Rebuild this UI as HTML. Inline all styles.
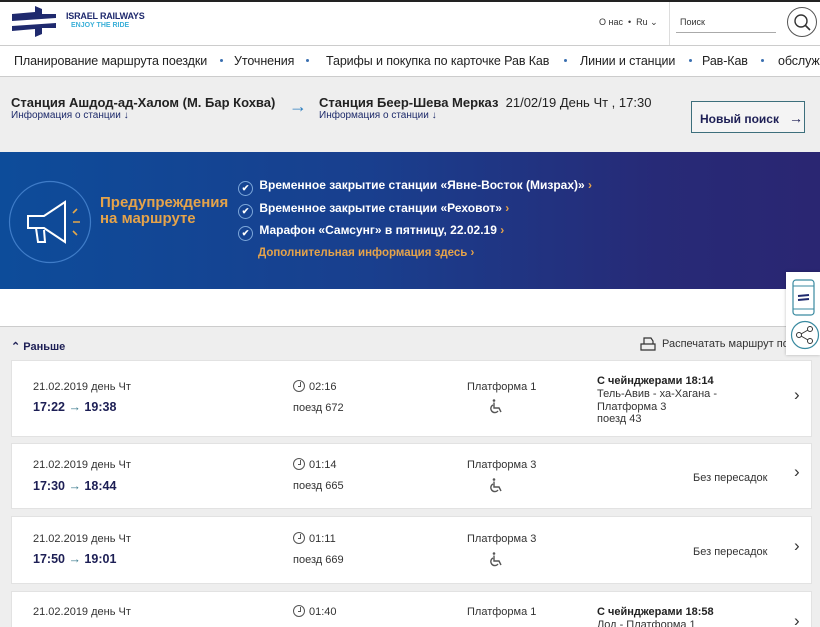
<!DOCTYPE html>
<html><head><meta charset="utf-8"><style>
*{margin:0;padding:0;box-sizing:border-box}
html,body{width:820px;height:627px;overflow:hidden}
body{font-family:"Liberation Sans",Arial,sans-serif;color:#222;background:#fff;position:relative}
.a{position:absolute;white-space:nowrap}
.nav{font-size:12.5px;color:#222;letter-spacing:-.1px;top:54px}
.dot{position:absolute;top:59px;width:3px;height:3px;border-radius:50%;background:#3a6fb0}
.card{position:absolute;left:11px;width:801px;background:#fff;border:1px solid #e2e2e2;overflow:hidden}
.card .a{font-size:11px;color:#333}
.card .tm{font-weight:bold;font-size:12.5px;color:#1d1f55}
.card .chev{font-size:17px;color:#333}
.ck{display:inline-block;width:12px;height:12px;border:1px solid #555;border-radius:50%;vertical-align:-2px;margin-right:4px;position:relative}
.ck:after{content:"";position:absolute;left:4px;top:1px;width:2px;height:4px;border-right:1px solid #555;border-bottom:1px solid #555}
.chk{display:inline-block;width:15px;height:15px;border-radius:50%;border:1px solid #7ca7da;font-size:9px;text-align:center;line-height:13px;vertical-align:-2px;margin-right:3px}
</style></head><body>
<div class="a" style="left:0;top:0;width:820px;height:2px;background:#222"></div>
<svg class="a" style="left:9px;top:5px" width="50" height="34" viewBox="0 0 50 34">
<path d="M3 9 L26 7 L26 1 L33 4 L33 9 L47 9 L47 13 L3 16Z" fill="#1f2a6e"/>
<path d="M3 21 L47 18 L47 23 L33 23 L33 29 L26 32 L26 24 L3 26Z" fill="#1f2a6e"/>
</svg>
<div class="a" style="left:66px;top:11px;font-size:9px;font-weight:bold;color:#1f2a6e;letter-spacing:-.2px">ISRAEL RAILWAYS</div>
<div class="a" style="left:71px;top:22px;font-size:7px;font-weight:bold;color:#3cb0d8">ENJOY THE RIDE</div>
<div class="a" style="left:599px;top:17px;font-size:9px;color:#333">О нас &nbsp;•&nbsp; Ru ⌄</div>
<div class="a" style="left:669px;top:2px;width:1px;height:43px;background:#ddd"></div>
<div class="a" style="left:680px;top:17px;font-size:9px;color:#333">Поиск</div>
<div class="a" style="left:676px;top:32px;width:100px;height:1px;background:#aaa"></div>
<svg class="a" style="left:786px;top:6px" width="32" height="32" viewBox="0 0 32 32"><circle cx="16" cy="16" r="14.5" fill="none" stroke="#555" stroke-width="1"/><circle cx="15" cy="15" r="6" fill="none" stroke="#333" stroke-width="1.4"/><path d="M19.5 19.5 L24 24" stroke="#333" stroke-width="1.6"/></svg>
<div class="a" style="left:0;top:45px;width:820px;height:1px;background:#ccc"></div>
<div class="a nav" style="left:14px">Планирование маршрута поездки</div>
<div class="dot" style="left:220px"></div>
<div class="a nav" style="left:234px">Уточнения</div>
<div class="dot" style="left:306px"></div>
<div class="a nav" style="left:326px">Тарифы и покупка по карточке Рав Кав</div>
<div class="dot" style="left:564px"></div>
<div class="a nav" style="left:580px">Линии и станции</div>
<div class="dot" style="left:689px"></div>
<div class="a nav" style="left:702px">Рав-Кав</div>
<div class="dot" style="left:761px"></div>
<div class="a nav" style="left:778px">обслуживание</div>
<div class="a" style="left:0;top:76px;width:820px;height:76px;background:#eeeeee;border-top:1px solid #ccc"></div>
<div class="a" style="left:11px;top:95px;font-size:13px;font-weight:bold;color:#222">Станция Ашдод-ад-Халом (М. Бар Кохва)</div>
<div class="a" style="left:11px;top:110px;font-size:10px;color:#1d2a6a">Информация о станции ↓</div>
<div class="a" style="left:289px;top:96px;font-size:18px;color:#2c7fc0">→</div>
<div class="a" style="left:319px;top:95px;font-size:13px;font-weight:bold;color:#222">Станция Беер-Шева Мерказ <span style="font-weight:normal">&nbsp;21/02/19 День Чт , 17:30</span></div>
<div class="a" style="left:319px;top:110px;font-size:10px;color:#1d2a6a">Информация о станции ↓</div>
<div class="a" style="left:691px;top:101px;width:114px;height:32px;border:1.5px solid #3d6f7c;background:#f4f4f4;font-size:12px;font-weight:bold;color:#1d1f55;padding:8px 0 0 8px">Новый поиск &nbsp; <span style="font-size:14px;font-weight:normal">→</span></div>
<div class="a" style="left:0;top:152px;width:820px;height:137px;background:linear-gradient(90deg,#0d4c9a 0%,#193f8e 45%,#272a77 80%,#2a2672 100%)"></div>
<svg class="a" style="left:8px;top:180px" width="84" height="84" viewBox="0 0 84 84"><circle cx="42" cy="42" r="40.5" fill="none" stroke="#3f7cc8" stroke-width="1.2"/>
<path d="M20 36 L36 36 L57 22 L57 62 L36 48 L20 48 Z" fill="none" stroke="#fff" stroke-width="2"/><path d="M28 48 L30 62 L37 62 L36 50" fill="none" stroke="#fff" stroke-width="2"/>
<path d="M65 33 L69 29 M65 42 L72 42 M65 51 L69 55" stroke="#e6a84a" stroke-width="1.6"/></svg>
<div class="a" style="left:100px;top:195px;font-size:15px;font-weight:bold;color:#e5a34a;line-height:16px">Предупреждения<br>на маршруте</div>
<div class="a" style="left:238px;top:174px;font-size:12px;font-weight:bold;color:#fff;line-height:22.5px">
<div><span class="chk">✔</span> Временное закрытие станции «Явне-Восток (Мизрах)» <span style="color:#e5a34a">›</span></div>
<div><span class="chk">✔</span> Временное закрытие станции «Реховот» <span style="color:#e5a34a">›</span></div>
<div><span class="chk">✔</span> Марафон «Самсунг» в пятницу, 22.02.19 <span style="color:#e5a34a">›</span></div>
<div style="color:#e5a34a;padding-left:20px;font-size:11.5px">Дополнительная информация здесь ›</div>
</div>
<div class="a" style="left:0;top:326px;width:820px;height:301px;background:#eeeeee;border-top:1px solid #ccc"></div>
<div class="a" style="left:11px;top:340px;font-size:11px;font-weight:bold;color:#1d1f55">⌃ Раньше</div>
<svg class="a" style="left:640px;top:336px" width="16" height="15" viewBox="0 0 16 15"><path d="M1 8 L15 8 L15 14 L1 14 Z M4 8 L4 2 L11 2 L13 5 L13 8" fill="none" stroke="#333" stroke-width="1.2"/></svg>
<div class="a" style="left:662px;top:338px;font-size:11px;color:#333">Распечатать маршрут по</div>

<svg width="0" height="0" style="position:absolute"><defs><g id="wc"><circle cx="4" cy="1.5" r="1.3" fill="#555"/><path d="M4 3.5 L4 9 L9 9 L11 13 M3 6 A4 4 0 1 0 8 12" fill="none" stroke="#555" stroke-width="1.4"/></g></defs></svg>

<div class="card" style="top:360px;height:77px">
<div class="a" style="left:21px;top:20px">21.02.2019 день Чт</div>
<div class="a tm" style="left:21px;top:39px">17:22 <span style="color:#3a7a8c;font-weight:normal">→</span> 19:38</div>
<div class="a" style="left:281px;top:19px"><span class="ck"></span>02:16</div><div class="a" style="left:281px;top:41px">поезд 672</div>
<div class="a" style="left:455px;top:20px">Платформа 1</div><svg class="a" style="left:478px;top:38px" width="13" height="15"><use href="#wc"/></svg>
<div class="a" style="left:585px;top:14px;font-weight:bold;color:#222">С чейнджерами 18:14</div>
<div class="a" style="left:585px;top:27px;line-height:12.5px">Тель-Авив - ха-Хагана -<br>Платформа 3<br>поезд 43</div>
<div class="a chev" style="left:782px;top:24px">›</div></div>

<div class="card" style="top:443px;height:66px">
<div class="a" style="left:21px;top:15px">21.02.2019 день Чт</div>
<div class="a tm" style="left:21px;top:35px">17:30 <span style="color:#3a7a8c;font-weight:normal">→</span> 18:44</div>
<div class="a" style="left:281px;top:14px"><span class="ck"></span>01:14</div><div class="a" style="left:281px;top:36px">поезд 665</div>
<div class="a" style="left:455px;top:15px">Платформа 3</div><svg class="a" style="left:478px;top:34px" width="13" height="15"><use href="#wc"/></svg>
<div class="a" style="left:681px;top:28px">Без пересадок</div>
<div class="a chev" style="left:782px;top:18px">›</div></div>

<div class="card" style="top:516px;height:68px">
<div class="a" style="left:21px;top:16px">21.02.2019 день Чт</div>
<div class="a tm" style="left:21px;top:35px">17:50 <span style="color:#3a7a8c;font-weight:normal">→</span> 19:01</div>
<div class="a" style="left:281px;top:15px"><span class="ck"></span>01:11</div><div class="a" style="left:281px;top:37px">поезд 669</div>
<div class="a" style="left:455px;top:16px">Платформа 3</div><svg class="a" style="left:478px;top:35px" width="13" height="15"><use href="#wc"/></svg>
<div class="a" style="left:681px;top:29px">Без пересадок</div>
<div class="a chev" style="left:782px;top:19px">›</div></div>

<div class="card" style="top:591px;height:36px;border-bottom:none">
<div class="a" style="left:21px;top:14px">21.02.2019 день Чт</div>
<div class="a" style="left:281px;top:13px"><span class="ck"></span>01:40</div>
<div class="a" style="left:455px;top:14px">Платформа 1</div>
<div class="a" style="left:585px;top:14px;font-weight:bold;color:#222">С чейнджерами 18:58</div>
<div class="a" style="left:585px;top:27px">Лод - Платформа 1</div>
<div class="a chev" style="left:782px;top:19px">›</div></div>

<div class="a" style="left:786px;top:272px;width:34px;height:83px;background:#fff;box-shadow:0 0 3px rgba(0,0,0,.25)"></div>
<svg class="a" style="left:792px;top:279px" width="23" height="38" viewBox="0 0 23 38"><rect x="1" y="1" width="21" height="35" rx="3" fill="none" stroke="#3a8aa0" stroke-width="1.2"/><path d="M1 7 H22 M1 30 H22" stroke="#3a8aa0"/><path d="M6 17 L17 16 M6 21 L17 20" stroke="#1f2a6e" stroke-width="2"/></svg>
<svg class="a" style="left:790px;top:320px" width="30" height="30" viewBox="0 0 30 30"><circle cx="15" cy="15" r="13.5" fill="none" stroke="#3a8aa0" stroke-width="1.2"/><circle cx="9" cy="15" r="2.5" fill="none" stroke="#333"/><circle cx="20" cy="9" r="2.5" fill="none" stroke="#333"/><circle cx="20" cy="21" r="2.5" fill="none" stroke="#333"/><path d="M11 14 L18 10 M11 16 L18 20" stroke="#333"/></svg>
</body></html>
